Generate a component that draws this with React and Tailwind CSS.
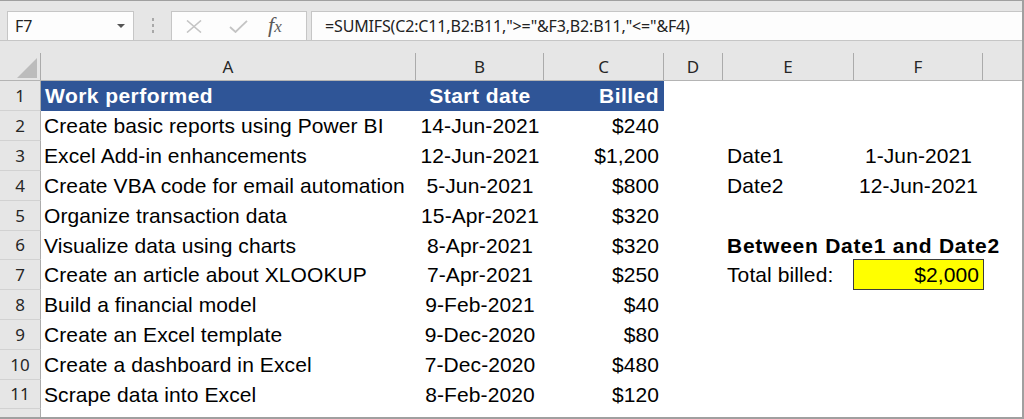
import React from "react";

const COLS = [375, 128, 120, 59, 131, 129];
const LETTERS = ["A", "B", "C", "D", "E", "F"];
const HEIGHTS = [30, 30, 30, 30, 30, 29, 30, 30, 30, 30, 29];

const DATA = [
  ["Create basic reports using Power BI", "14-Jun-2021", "$240"],
  ["Excel Add-in enhancements", "12-Jun-2021", "$1,200"],
  ["Create VBA code for email automation", "5-Jun-2021", "$800"],
  ["Organize transaction data", "15-Apr-2021", "$320"],
  ["Visualize data using charts", "8-Apr-2021", "$320"],
  ["Create an article about XLOOKUP", "7-Apr-2021", "$250"],
  ["Build a financial model", "9-Feb-2021", "$40"],
  ["Create an Excel template", "9-Dec-2020", "$80"],
  ["Create a dashboard in Excel", "7-Dec-2020", "$480"],
  ["Scrape data into Excel", "8-Feb-2020", "$120"],
];

function RowHeader({ n, h }) {
  return (
    <div
      className="w-[41px] shrink-0 bg-[#e6e6e6] border-r border-r-[#ababab] border-b border-b-[#d2d2d2] flex items-center justify-center text-[17px] text-[#262626] font-normal tracking-normal font-['Noto_Sans',sans-serif]"
      style={{ height: h }}
    >
      {n}
    </div>
  );
}

function EF({ r }) {
  if (r === 3)
    return (
      <>
        <div className="w-[131px] shrink-0 pl-[4px] flex items-center">Date1</div>
        <div className="w-[129px] shrink-0 flex items-center justify-center">1-Jun-2021</div>
      </>
    );
  if (r === 4)
    return (
      <>
        <div className="w-[131px] shrink-0 pl-[4px] flex items-center">Date2</div>
        <div className="w-[129px] shrink-0 flex items-center justify-center">12-Jun-2021</div>
      </>
    );
  if (r === 6)
    return (
      <>
        <div className="w-[131px] shrink-0 pl-[4px] flex items-center whitespace-nowrap font-bold tracking-[0.75px]">
          Between Date1 and Date2
        </div>
        <div className="w-[129px] shrink-0" />
      </>
    );
  if (r === 7)
    return (
      <>
        <div className="w-[131px] shrink-0 pl-[4px] flex items-center whitespace-nowrap">Total billed:</div>
        <div className="w-[129px] shrink-0 h-full">
          <div className="h-[29px] bg-[#ffff00] shadow-[0_0_0_1px_#3c3c3c] flex items-center justify-end pr-[4px]">
            $2,000
          </div>
        </div>
      </>
    );
  return (
    <>
      <div className="w-[131px] shrink-0" />
      <div className="w-[129px] shrink-0" />
    </>
  );
}

export default function App() {
  return (
    <div className="w-[1024px] h-[419px] overflow-hidden bg-white border-t border-r-2 border-b-2 border-[#a0a0a0] flex flex-col">
      {/* Formula bar */}
      <div className="h-[40px] shrink-0 bg-[#e6e6e6] border-b border-[#c6c6c6] flex items-end font-['Noto_Sans',sans-serif]">
        <div className="ml-[7px] w-[127px] h-[29px] bg-[#fdfdfd] border-t border-l border-r border-[#c6c6c6] flex items-center justify-between pl-[7px] pr-[8px]">
          <span className="text-[16px] text-[#222]">F7</span>
          <svg width="8" height="4" viewBox="0 0 8 4">
            <path d="M0 0 L8 0 L4 4 Z" fill="#555" />
          </svg>
        </div>
        <div className="w-[37px] h-[29px] flex flex-col items-center justify-center gap-[3px]">
          <div className="w-[2px] h-[3px] bg-[#a8a8a8]" />
          <div className="w-[2px] h-[3px] bg-[#a8a8a8]" />
          <div className="w-[2px] h-[3px] bg-[#a8a8a8]" />
        </div>
        <div className="w-[136px] h-[29px] bg-[#fdfdfd] border-t border-l border-r border-[#c6c6c6] flex items-center">
          <div className="w-[30px] ml-[7px] flex justify-center">
            <svg width="16" height="13" viewBox="0 0 16 13">
              <path d="M1 0.5 L15 12.5 M15 0.5 L1 12.5" stroke="#c4c4c4" strokeWidth="1.6" />
            </svg>
          </div>
          <div className="w-[30px] ml-[14px] flex justify-center">
            <svg width="19" height="13" viewBox="0 0 19 13">
              <path d="M1 7 L6.5 12 L18 0.8" stroke="#c4c4c4" strokeWidth="1.8" fill="none" />
            </svg>
          </div>
          <div className="ml-[15px] italic font-['Liberation_Serif',serif] text-[22px] text-[#5a5a5a] leading-none -mt-[2px]">
            f<span className="text-[17px]">x</span>
          </div>
        </div>
        <div className="ml-[4px] flex-1 h-[29px] bg-[#fdfdfd] border-t border-l border-[#c6c6c6] flex items-center pl-[13px] text-[16px] text-[#222] whitespace-nowrap tracking-[-0.15px]">
          =SUMIFS(C2:C11,B2:B11,"&gt;="&amp;F3,B2:B11,"&lt;="&amp;F4)
        </div>
      </div>

      {/* Column headers */}
      <div className="h-[40px] shrink-0 bg-[#e6e6e6] border-b border-[#b4b4b4] flex font-['Noto_Sans',sans-serif] text-[17px] text-[#262626]">
        <div className="w-[41px] shrink-0 flex flex-col">
          <div className="h-[12px]" />
          <div className="flex-1 border-r border-[#ababab] flex items-end justify-end pr-[3px] pb-[2px]">
            <svg width="20" height="20" viewBox="0 0 20 20">
              <path d="M20 0 L20 20 L0 20 Z" fill="#bcbcbc" />
            </svg>
          </div>
        </div>
        {COLS.map((w, i) => (
          <div key={i} className="shrink-0 flex flex-col" style={{ width: w }}>
            <div className="h-[12px]" />
            <div className="flex-1 border-r border-[#ababab] flex items-center justify-center">
              {LETTERS[i]}
            </div>
          </div>
        ))}
        <div className="flex-1" />
      </div>

      {/* Grid rows */}
      <div className="flex-1 flex flex-col font-['Liberation_Sans',Arial,sans-serif] text-[21px] tracking-[0.1px] text-black">
        <div className="flex shrink-0" style={{ height: HEIGHTS[0] }}>
          <RowHeader n={1} h={HEIGHTS[0]} />
          <div className="w-[375px] shrink-0 bg-[#2f5597] text-white font-bold tracking-[0.45px] pl-[4px] flex items-center">
            Work performed
          </div>
          <div className="w-[128px] shrink-0 bg-[#2f5597] text-white font-bold tracking-[0.45px] flex items-center justify-center">
            Start date
          </div>
          <div className="w-[120px] shrink-0 bg-[#2f5597] text-white font-bold tracking-[0.45px] flex items-center justify-end pr-[5px]">
            Billed
          </div>
        </div>
        {DATA.map((row, i) => {
          const r = i + 2;
          const h = HEIGHTS[i + 1];
          return (
            <div key={r} className="flex shrink-0" style={{ height: h }}>
              <RowHeader n={r} h={h} />
              <div className="w-[375px] shrink-0 pl-[3px] flex items-center whitespace-nowrap">{row[0]}</div>
              <div className="w-[128px] shrink-0 flex items-center justify-center whitespace-nowrap">{row[1]}</div>
              <div className="w-[120px] shrink-0 flex items-center justify-end pr-[5px]">{row[2]}</div>
              <div className="w-[59px] shrink-0" />
              <EF r={r} />
            </div>
          );
        })}
        <div className="flex flex-1">
          <div className="w-[41px] shrink-0 bg-[#e6e6e6] border-r border-[#ababab]" />
        </div>
      </div>
    </div>
  );
}
